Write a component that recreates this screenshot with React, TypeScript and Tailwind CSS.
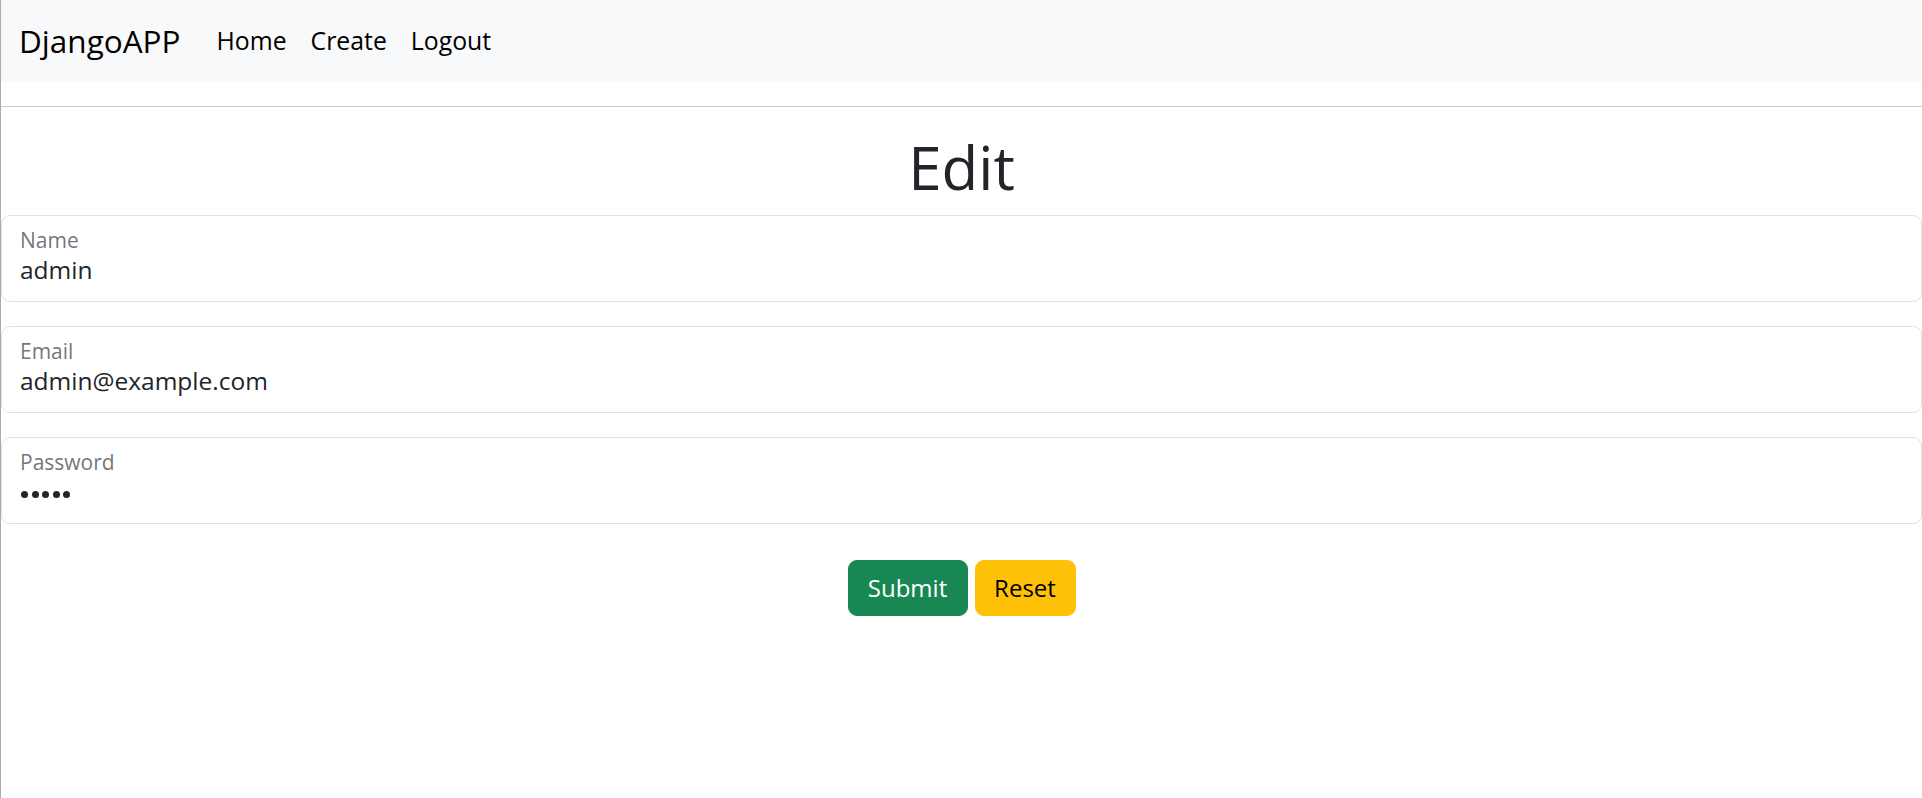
import React from 'react';

const fields = [
  { label: 'Name', value: 'admin' },
  { label: 'Email', value: 'admin@example.com' },
  { label: 'Password', value: '' },
];

export default function App() {
  return (
    <div className="min-h-[798px] bg-white border-l border-[#a9abad] text-[#212529] font-['Segoe_UI','Open_Sans','Noto_Sans',sans-serif]">
      <nav className="h-[82px] bg-[#f8f9fa] flex items-center px-[18px] pb-[2px]">
        <a className="text-[31.5px] leading-[45px] text-black mr-[24px]">DjangoAPP</a>
        <ul className="flex">
          {['Home', 'Create', 'Logout'].map((item) => (
            <li key={item}>
              <a className="block px-[12px] text-[24.8px] leading-[36px] text-black">{item}</a>
            </li>
          ))}
        </ul>
      </nav>

      <hr className="mt-[24px] border-0 h-px bg-[#c8c9ca]" />

      <h1 className="mt-[24px] mb-[12px] text-center text-[60px] leading-[72px] font-normal">Edit</h1>

      <form className="flex flex-col gap-[24px]">
        {fields.map((field) => (
          <div
            key={field.label}
            className="h-[87px] border border-[#dee2e6] rounded-[9px] px-[18px] pt-[12px] flex flex-col"
          >
            <label className="text-[21px] leading-[24px] text-[#212529]/65">{field.label}</label>
            {field.label === 'Password' ? (
              <div className="h-[36px] pt-[4px] flex items-center gap-[3.5px] pl-[1px]">
                {[0, 1, 2, 3, 4].map((i) => (
                  <span key={i} className="w-[7px] h-[7px] rounded-full bg-[#212529]" />
                ))}
              </div>
            ) : (
              <div className="text-[24.5px] leading-[36px]">{field.value}</div>
            )}
          </div>
        ))}
      </form>

      <div className="mt-[36px] flex justify-center gap-[7px]">
        <button className="w-[120px] py-[9px] border border-[#198754] bg-[#198754] text-white text-[24px] leading-[36px] rounded-[9px]">
          Submit
        </button>
        <button className="w-[101px] py-[9px] border border-[#ffc107] bg-[#ffc107] text-black text-[24px] leading-[36px] rounded-[9px]">
          Reset
        </button>
      </div>
    </div>
  );
}
